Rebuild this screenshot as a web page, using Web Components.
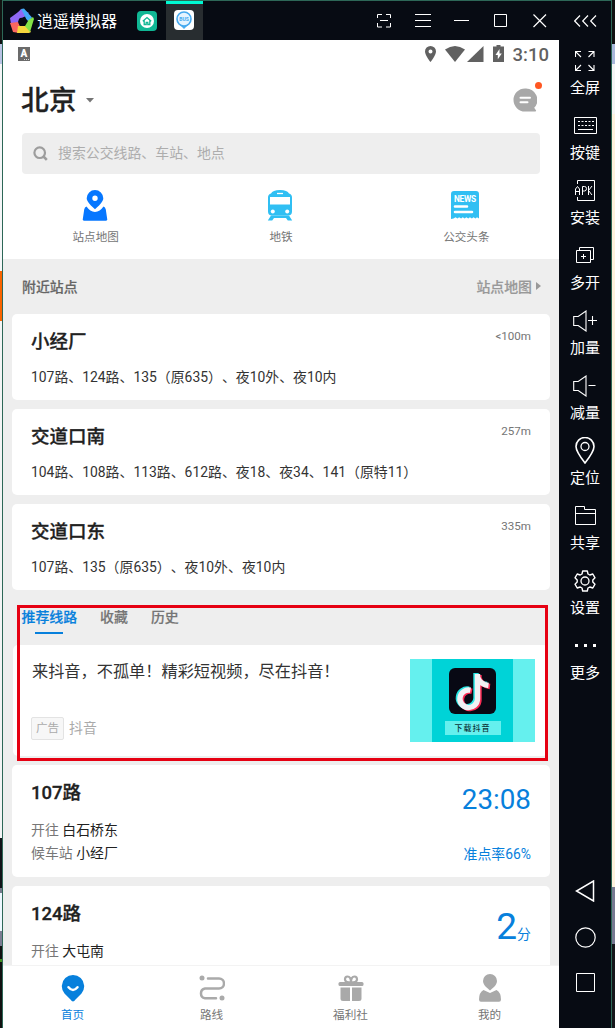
<!DOCTYPE html>
<html lang="zh-CN">
<head>
<meta charset="utf-8">
<title>逍遥模拟器</title>
<style>
html,body{margin:0;padding:0;height:100%;overflow:hidden}
body{font-family:Roboto,"Noto Sans CJK SC",sans-serif;text-spacing-trim:space-all}
</style>
</head>
<body>
<emulator-page></emulator-page>
<script>
const ICONS={
logo:[26,26,'<path d="M5 9L12 1l8 4-6 5z" fill="#8f68f5"/><path d="M12 1l3-.5 8 9-4 6-3-7z" fill="#43a8f5"/><path d="M1 10l11-8 3 5-5 4 1 4-9 1z" fill="#8f68f5"/><path d="M1 15l8-1 2 4-1 7-6-1z" fill="#fb665f"/><path d="M9 18h9l4 6-2 1H8z" fill="#f5d63e"/><path d="M24 9l1 2-4 13-6-7 2-3z" fill="#83e447"/><path d="M10 11l5-2 4 4-3 5h-5l-2-4z" fill="#070b13"/>'],
home:[20,20,'<rect width="20" height="20" rx="4" fill="#10b794"/><circle cx="10" cy="10" r="7" fill="#fff"/><path d="M5.800 10.200L10 6.500l4.200 3.700M7.200 9.300v4.200h2v-2.200h1.600v2.200h2V9.300" fill="none" stroke="#10b794" stroke-width="1.300"/>'],
bus:[20,20,'<rect width="20" height="20" rx="4" fill="#fff"/><path d="M10 19l-4-4h8z" fill="#4aaef0"/><circle cx="10" cy="9" r="7" fill="#e4f4ff" stroke="#45a9ef" stroke-width="1.600"/><text x="10" y="11" text-anchor="middle" font-family="Roboto" font-size="5" font-weight="700" fill="#45a9ef">BUS</text>'],
scan:[14,14,'<path d="M.5 4V.5H5M9 .5h4.500V4M13.500 9v4H9M5 13H.5V9M3 6.500h8" fill="none" stroke="#fff"/>'],
menu:[16,14,'<path d="M0 .5h16M0 6.500h16M0 12.500h16" stroke="#fff"/>'],
min:[15,14,'<path d="M0 6.500h15" stroke="#fff"/>'],
max:[13,13,'<path d="M.5.5h12v12H.5z" fill="none" stroke="#fff"/>'],
close:[14,14,'<path d="M.5.5l12.500 12.500M13 .5L.5 13" stroke="#fff" stroke-width="1.200"/>'],
collapse:[23,12,'<path d="M6 .5L.7 6 6 11.500M14 .5L8.700 6l5.300 5.500M22 .5L16.700 6l5.300 5.500" fill="none" stroke="#fff" stroke-width="1.200"/>'],
abox:[12,14,'<rect width="12" height="14" fill="#6b6b6b"/><text x="6" y="10" text-anchor="middle" font-family="Roboto" font-size="10" font-weight="900" fill="#fff">A</text><path d="M6 12.500h5" stroke="#ddd" stroke-dasharray="1 1"/>'],
loc:[11,16,'<path fill-rule="evenodd" d="M5.500 0A5.500 5.500 0 0 0 0 5.500C0 9.500 5.500 16 5.500 16S11 9.500 11 5.500A5.500 5.500 0 0 0 5.500 0zm0 7.500a2 2 0 1 1 0-4 2 2 0 0 1 0 4z" fill="#616161"/>'],
wifi:[20,16,'<path d="M0 3.500Q10-3.500 20 3.500L10 16z" fill="#616161"/>'],
signal:[17,16,'<path d="M16.500 0v16H0z" fill="#616161"/>'],
battery:[11,17,'<path fill-rule="evenodd" d="M3.500 0h4v1.500H11V17H0V1.500h3.500zM6.500 4L2.500 10h2.300v4.300L8.800 8.500H6.500z" fill="#616161"/>'],
chat:[24,24,'<path d="M12 .5a11.500 11.500 0 1 0 0 23h10.500q1-.4.400-1.200l-1.700-2.500A11.500 11.500 0 0 0 12 .5z" fill="#a8a8a8"/><path d="M7.500 9.800h9.500M7.500 14.300h7" stroke="#fff" stroke-width="2" stroke-linecap="round"/>'],
search:[16,16,'<circle cx="6.700" cy="6.700" r="5.300" fill="none" stroke="#9d9d9d" stroke-width="2.200"/><path d="M10.500 10.500l3.300 3.300" stroke="#9d9d9d" stroke-width="2.600"/>'],
map:[26,31,'<path fill-rule="evenodd" d="M13 0a8.300 8.300 0 0 0-8.300 8.300c0 3.600 5 8 8.300 11 3.300-3 8.300-7.400 8.300-11A8.300 8.300 0 0 0 13 0zm0 11a2.700 2.700 0 1 1 0-5.400A2.700 2.700 0 0 1 13 11z" fill="#0677ff"/><path d="M4.500 16.500Q8 21.500 13 22q5-.5 8.500-5.500 1.700.5 2.300 3l1.500 10.200-1 1H1.700l-1-1L2.200 19.500q.5-2.500 2.300-3z" fill="#0677ff"/>'],
metro:[26,31,'<path d="M4 3.500Q5.500 0 13 0t9 3.500q3 .8 3 4v14q0 4-4 4H5q-4 0-4-4v-14q0-3.200 3-4z" fill="#30bff3"/><path d="M4 25.500l-3.200 5h4.400L7 28h12l1.800 2.500h4.400l-3.200-5z" fill="#30bff3"/><path d="M3 7h20v7.500H3z" fill="#fff"/><path d="M10 3.500h6" stroke="#fff" stroke-width="1.300"/><circle cx="5.800" cy="21.500" r="2" fill="#fff"/><circle cx="20.200" cy="21.500" r="2" fill="#fff"/>'],
news:[28,28,'<path d="M0 3q0-3 3-3h22q3 0 3 3v24.500l-2-1.300-1.500 1.300-2-1.300-1.600 1.300-2-1.300-1.600 1.300-2-1.300-1.600 1.300-2-1.300-1.600 1.300-2-1.300-1.600 1.300-2-1.300L2.500 27.500 0 28z" fill="#30bff3"/><text x="3" y="11" textLength="22" font-family="Roboto" font-size="8.300" font-weight="700" fill="#fff">NEWS</text><path d="M4 15.500h12M4 21h17" stroke="#fff" stroke-width="2.600" stroke-linecap="round"/>'],
caret:[8,5,'<path d="M0 0h8L4 4.500z" fill="#757575"/>'],
right:[5,8,'<path d="M0 0v8l5-4z" fill="#999"/>'],
navhome:[24,28,'<path d="M12 27.500q-1.200 0-2.500-2L3.500 19.500A11.200 11.200 0 1 1 20.500 19.500L14.500 25.500q-1.300 2-2.500 2z" fill="#0780dc"/><path d="M7.500 13.300q4.500 5.400 9 0" fill="none" stroke="#fff" stroke-width="2.500" stroke-linecap="round"/>'],
route:[26,26,'<path d="M9 3.500h11a5 5 0 0 1 0 10H6a5 5 0 0 0 0 9.800h11" fill="none" stroke="#aaa" stroke-width="2.500" stroke-linecap="round"/><circle cx="3" cy="3" r="2.500" fill="#aaa"/><circle cx="23" cy="23" r="2.500" fill="#aaa"/>'],
gift:[26,26,'<path d="M13 7.500q-6 0-6-3Q7 1.500 9.500 1.500 13 1.500 13 7.500 13 1.500 16.500 1.500 19 1.500 19 4.500q0 3-6 3" fill="none" stroke="#a9a9a9" stroke-width="2.200"/><rect x=".5" y="7" width="25" height="4" rx="1.500" fill="#a9a9a9"/><path d="M2.500 12.500H12V26H5q-2.500 0-2.500-2.500zM14 12.500h9.500v11Q23.500 26 21 26h-7z" fill="#a9a9a9"/>'],
user:[24,28,'<path d="M12 0a7 7 0 0 0-7 7c0 4.500 5 7.500 7 9.500 2-2 7-5 7-9.500a7 7 0 0 0-7-7z" fill="#a9a9a9"/><path d="M5.500 16L12 19l6.500-3q4.500 2.500 4.500 9.500 0 2.300-2 2.300H3q-2 0-2-2.300 0-7 4.500-9.500z" fill="#a9a9a9"/>'],
full:[20,20,'<path d="M.5 6V.5H6M1 1l5 5M13.500.5h5.500V6M18.500 1l-5 5M.5 14v5.500H6M1 19l5-5M19 14v5.500h-5.500M18.500 19l-5-5" fill="none" stroke="#fff" stroke-width="1.100"/>'],
keys:[23,17,'<path d="M.5.500h22v16H.5z" fill="none" stroke="#fff"/><path d="M4 4.500h16M4 8.500h16" stroke="#fff" stroke-dasharray="2 1.500"/><path d="M4 12.500h15" stroke="#fff"/>'],
apk:[23,21,'<path d="M3.500 4V.5h17v20h-17V17" fill="none" stroke="#fff"/><path d="M1.500 15V9L3.500 6.500 5.500 9v6M1.500 11.500h4M8.500 15V6.500h2q2 0 2 2.200t-2 2.300h-2M14.500 6v9M18 6l-3.500 4.500L18 15" fill="none" stroke="#fff"/>'],
multi:[19,17,'<path d="M3.500 3V.5h14v12H15M.5 3.500h14v12H.5zM5 9.500h5M7.500 7v5" fill="none" stroke="#fff"/>'],
volup:[24,22,'<path d="M.7 6.500h4.500L13 1v20l-7.800-5.500H.7zM15 10.500h9M19.500 6v9" fill="none" stroke="#fff" stroke-width="1.100"/>'],
voldown:[24,22,'<path d="M.7 6.500h4.500L13 1v20l-7.800-5.500H.7zM15.500 10.500h7" fill="none" stroke="#fff" stroke-width="1.100"/>'],
pin:[20,27,'<path d="M10 26Q1 14.500 1 9.500a9 9 0 0 1 18 0Q19 14.500 10 26z" fill="none" stroke="#fff" stroke-width="1.600"/><circle cx="10" cy="9.500" r="4" fill="none" stroke="#fff" stroke-width="1.300"/>'],
folder:[21,19,'<path d="M.5 18.500V.5h9v3h11v15zM.5 7.500h20" fill="none" stroke="#fff"/>'],
gear:[22,22,'<path d="M8.700 1h4.600l.7 3 1.800 1 3-1 2.200 3.800-2.200 2.100v2.200l2.200 2.100-2.200 3.800-3-1-1.800 1-.7 3H8.700L8 18l-1.800-1-3 1L1 14.200l2.200-2.100V9.900L1 7.800 3.200 4l3 1L8 4z" fill="none" stroke="#fff" stroke-width="1.400" stroke-linejoin="round"/><circle cx="11" cy="11" r="4" fill="none" stroke="#fff" stroke-width="1.300"/>'],
more:[21,3,'<path d="M0 0h3v3H0zM9 0h3v3H9zM18 0h3v3h-3z" fill="#fff"/>'],
back:[20,22,'<path d="M18.500 1v20L1.500 11z" fill="none" stroke="#fff" stroke-width="1.500"/>'],
circle:[21,21,'<circle cx="10.500" cy="10.500" r="9.700" fill="none" stroke="#fff" stroke-width="1.200"/>'],
square:[19,19,'<path d="M.5.5h18v18H.5z" fill="none" stroke="#fff"/>'],
tiktok:[47,46,'<rect width="47" height="46" rx="6" fill="#080914"/><g fill="none" stroke-width="5.400"><path d="M27 5V30a8.800 8.800 0 1 1-7-8.800M27 8q2.500 7.500 11 8.500" stroke="#25e5e2"/><path d="M30 7V32a8.800 8.800 0 1 1-7-8.800M30 10q2.500 7.500 11 8.500" stroke="#fb2c55"/><path d="M28.500 6V31a8.800 8.800 0 1 1-7-8.800M28.500 9q2.500 7.500 11 8.500" stroke="#f1f1f3"/></g>']
};
function define(name,html){
  const t=document.createElement('template');t.innerHTML=html;
  customElements.define(name,class extends HTMLElement{
    constructor(){super();this.attachShadow({mode:'open'}).append(t.content.cloneNode(true))}
  });
}
customElements.define('ui-icon',class extends HTMLElement{
  connectedCallback(){
    const [w,h,body]=ICONS[this.getAttribute('name')];
    if(!this.shadowRoot)this.attachShadow({mode:'open'});
    this.shadowRoot.innerHTML=`<style>:host{display:block;flex:none;width:${w}px;height:${h}px}svg{display:block}</style><svg width="${w}" height="${h}" viewBox="0 0 ${w} ${h}">${body}</svg>`;
  }
});
define('title-bar',`<style>
:host{display:flex;height:39px;background:#070b13;color:#fff;align-items:center;font:16px/39px "Noto Sans CJK SC",sans-serif}
.name{margin-left:2px;width:80px;white-space:nowrap}.logo{margin-left:6px}
.home{margin-left:20px}.tab{margin-left:9px;width:37px;height:39px;box-sizing:border-box;border-top:3px solid #00f8d1;background:#282d30;display:flex;padding:6px 0 0 8px}
.tools{display:flex;align-items:center;margin-left:auto;padding-right:14px}
</style><ui-icon class="logo" name="logo"></ui-icon><span class="name">逍遥模拟器</span><ui-icon class="home" name="home"></ui-icon><div class="tab"><ui-icon name="bus"></ui-icon></div>
<div class="tools"><ui-icon name="scan"></ui-icon><ui-icon name="menu" style="margin-left:24px"></ui-icon><ui-icon name="min" style="margin-left:23px"></ui-icon><ui-icon name="max" style="margin-left:25px"></ui-icon><ui-icon name="close" style="margin-left:26px"></ui-icon><ui-icon name="collapse" style="margin-left:27px"></ui-icon></div>`);
define('side-item',`<style>:host{display:flex;flex-direction:column;align-items:center;height:65px;font:15px/20px "Noto Sans CJK SC",sans-serif}.i{height:35px;display:flex;align-items:center}.t{height:20px;margin-top:-1px}</style><div class="i"><slot name="icon"></slot></div><div class="t"><slot></slot></div>`);
define('side-bar',`<style>:host{display:flex;flex-direction:column;background:#070b13;color:#fff;width:52px;box-sizing:border-box;padding-top:3px}
.sys{margin-top:auto;display:flex;flex-direction:column;align-items:center;gap:25px;padding-bottom:36px}</style>
${[['full','全屏'],['keys','按键'],['apk','安装'],['multi','多开'],['volup','加量'],['voldown','减量'],['pin','定位'],['folder','共享'],['gear','设置'],['more','更多']].map(a=>`<side-item><ui-icon slot="icon" name="${a[0]}"></ui-icon>${a[1]}</side-item>`).join('')}
<div class="sys"><ui-icon name="back"></ui-icon><ui-icon name="circle"></ui-icon><ui-icon name="square"></ui-icon></div>`);
define('status-bar',`<style>:host{display:flex;height:28px;align-items:center;padding:0 10px 0 15px;color:#616161;font:500 18.500px/28px Roboto,sans-serif}.r{margin-left:auto;display:flex;align-items:center}.r span{padding-top:2px}</style>
<ui-icon name="abox"></ui-icon><div class="r"><ui-icon name="loc"></ui-icon><ui-icon name="wifi" style="margin-left:9px"></ui-icon><ui-icon name="signal" style="margin-left:2px"></ui-icon><ui-icon name="battery" style="margin:-2px 9px 0 9px"></ui-icon><span>3:10</span></div>`);
define('quick-link',`<style>:host{display:flex;flex:1;flex-direction:column;align-items:center;font-size:11.600px;line-height:16px;color:#757575}.i{height:32px;display:flex;align-items:center;margin-bottom:8px;margin-right:2px}</style><div class="i"><slot name="icon"></slot></div><div><slot></slot></div>`);
define('app-header',`<style>:host{display:block;background:#fff;height:219px}
.city{display:flex;align-items:center;height:64px;padding:0 19px;font-size:27.800px;line-height:66px;font-weight:500;color:#212121}
.city .t{height:64px;margin-left:-1px;-webkit-text-stroke:.3px #212121}
.city ui-icon.c{margin-left:9px}.chat{margin-left:auto;position:relative;margin-right:3px}.dot{position:absolute;right:-5px;top:-6px;width:7px;height:7px;border-radius:50%;background:#ff5722}
.search{margin:1px 19px 0;height:41px;border-radius:4px;background:#eee;display:flex;align-items:center;font-size:13.900px;line-height:41px;color:#adadad;padding-left:11px;gap:9px}
.links{display:flex;padding-top:15px}</style>
<status-bar></status-bar><div class="city"><span class="t">北京</span><ui-icon class="c" name="caret"></ui-icon><div class="chat"><ui-icon name="chat"></ui-icon><i class="dot"></i></div></div>
<div class="search"><ui-icon name="search"></ui-icon><span>搜索公交线路、车站、地点</span></div>
<div class="links"><quick-link><ui-icon slot="icon" name="map"></ui-icon>站点地图</quick-link><quick-link><ui-icon slot="icon" name="metro"></ui-icon>地铁</quick-link><quick-link><ui-icon slot="icon" name="news"></ui-icon>公交头条</quick-link></div>`);
define('station-card',`<style>:host{display:block;box-sizing:border-box;height:86px;margin:0 9px 9px;background:#fff;border-radius:5px;padding:15px 19px 0;color:#212121}
.h{display:flex;justify-content:space-between;font-size:18.500px;font-weight:500;line-height:26px;height:26px}.h>slot{-webkit-text-stroke:.3px #212121}.d{font-size:11.600px;font-weight:400;line-height:15px;color:#757575;-webkit-text-stroke:0}.l{font-size:13.900px;line-height:20px;margin-top:12px;white-space:nowrap;color:#333}</style>
<div class="h"><slot name="name"></slot><span class="d"><slot name="dist"></slot></span></div><div class="l"><slot></slot></div>`);
define('ad-card',`<style>:host{display:flex;justify-content:space-between;box-sizing:border-box;height:111px;margin:0 11px 0 10px;background:#fff;border-radius:5px;padding:14px 13px 0 18px}
.t{font-size:16.200px;line-height:26px;color:#333;white-space:nowrap;height:24px;margin-left:1px}.s{display:flex;align-items:center;gap:5px;margin-top:33px;font-size:13.900px;line-height:24px;color:#aaa}.b{box-sizing:border-box;font-size:11.600px;line-height:21px;border:1px solid #e3e3e3;background:#f7f7f7;border-radius:2px;width:33px;text-align:center;height:23px;white-space:nowrap}
.pic{width:125px;height:83px;background:#65f0ee;display:flex;padding-left:22px;box-sizing:border-box}.m{width:81px;background:#00d3d7;display:flex;flex-direction:column;align-items:center;padding-top:9px;box-sizing:border-box}.dl{background:#65f0ee;margin-top:7px;width:56px;height:14px;text-align:center;font-size:8px;line-height:15px;letter-spacing:1px;font-weight:500;color:#0c3438}</style>
<div><div class="t">来抖音，不孤单！精彩短视频，尽在抖音！</div><div class="s"><span class="b">广告</span><span>抖音</span></div></div>
<div class="pic"><div class="m"><ui-icon name="tiktok"></ui-icon><div class="dl">下载抖音</div></div></div>`);
define('route-card',`<style>:host{display:flex;justify-content:space-between;box-sizing:border-box;height:112px;margin:9px 9px 0;background:#fff;border-radius:5px;padding:15px 19px 0;color:#212121;font-size:13.900px;line-height:23px}
.n{font-size:18.500px;font-weight:500;line-height:26px;margin-bottom:13px;-webkit-text-stroke:.3px #212121}.r{color:#0780dc;text-align:right;display:flex;flex-direction:column;align-items:flex-end}::slotted(b){font-weight:400;color:#777}</style>
<div><div class="n"><slot name="name"></slot></div><slot></slot></div><div class="r"><slot name="time"></slot></div>`);
define('nav-item',`<style>:host{flex:1;display:flex;flex-direction:column;align-items:center;font-size:11.600px;line-height:16px;color:#757575}:host([active]){color:#0780dc}.i{height:28px;display:flex;align-items:center;margin-bottom:5px}</style><div class="i"><slot name="icon"></slot></div><div><slot></slot></div>`);
define('bottom-nav',`<style>:host{display:flex;box-sizing:border-box;height:63px;border-top:1px solid #f3f3f3;background:#fff;padding-top:8px;flex:none}</style>
<nav-item active><ui-icon slot="icon" name="navhome"></ui-icon>首页</nav-item><nav-item><ui-icon slot="icon" name="route"></ui-icon>路线</nav-item><nav-item><ui-icon slot="icon" name="gift"></ui-icon>福利社</nav-item><nav-item><ui-icon slot="icon" name="user"></ui-icon>我的</nav-item>`);
define('bus-app',`<style>:host{display:flex;flex-direction:column;width:556px;height:988px;background:#eee;overflow:hidden;font-family:Roboto,"Noto Sans CJK SC",sans-serif}
.body{flex:1;overflow:hidden}.sec{height:55px;box-sizing:border-box;display:flex;align-items:center;justify-content:space-between;padding:0 18px 2px 19px;font-size:13.900px;font-weight:500;color:#666;-webkit-text-stroke:.2px}.sec span{display:flex;align-items:center;gap:4px;color:#999}
.tabs{display:flex;gap:23px;padding:8px 19px 0;height:46px;box-sizing:border-box;font-size:13.900px;line-height:20px;font-weight:500;color:#757575;-webkit-text-stroke:.2px}.on{color:#0780dc;display:flex;flex-direction:column;align-items:center;margin-left:-.5px}.on i{width:28px;height:2px;margin-top:5px;background:#0780dc}
.time{font-size:27.800px;line-height:40px;margin-bottom:23px}.two{font-size:37px;line-height:52px}.two small{font-size:13.900px}</style>
<app-header></app-header><div class="body"><div class="sec">附近站点<span>站点地图<ui-icon name="right"></ui-icon></span></div>
<station-card><span slot="name">小经厂</span><span slot="dist">&lt;100m</span>107路、124路、135（原635）、夜10外、夜10内</station-card>
<station-card><span slot="name">交道口南</span><span slot="dist">257m</span>104路、108路、113路、612路、夜18、夜34、141（原特11）</station-card>
<station-card><span slot="name">交道口东</span><span slot="dist">335m</span>107路、135（原635）、夜10外、夜10内</station-card>
<div class="tabs"><span class="on">推荐线路<i></i></span><span>收藏</span><span>历史</span></div>
<ad-card></ad-card>
<route-card><span slot="name">107路</span><b>开往</b> 白石桥东<br><b>候车站</b> 小经厂<span slot="time" class="time">23:08</span><span slot="time">准点率66%</span></route-card>
<route-card><span slot="name">124路</span><b>开往</b> 大屯南<span slot="time" class="two">2<small>分</small></span></route-card>
</div><bottom-nav></bottom-nav>`);
define('emulator-page',`<style>:host{display:grid;grid-template-columns:2px 610px 3px;width:615px;height:1028px;position:relative}
.l{background:linear-gradient(#111 0 44px,#b9c3e4 44px 64px,#f5f6f8 64px 271px,#fa6400 271px 321px,#f3f4f5 321px 838px,#111318 838px 888px,#777a8c 888px 893px,#eef7ff 893px 931px,#7b7c92 931px 946px,#111 946px 959px,#429020 959px 962px,#111 962px)}
.r{background:linear-gradient(#111 0 44px,#a9b7da 44px 64px,#f4f4f4 64px 114px,#fdf1dd 114px 887px,#777991 887px 944px,#15161a 944px)}
.win{box-sizing:border-box;border:1px solid #2d6757;border-bottom:0;height:1028px;overflow:hidden}.main{display:flex;height:988px}side-bar{width:52px}
.mark{position:absolute;left:17px;top:605px;width:531px;height:156px;box-sizing:border-box;border:3px solid #e60012}</style>
<div class="l"></div><div class="win"><title-bar></title-bar><div class="main"><bus-app></bus-app><side-bar></side-bar></div></div><div class="r"></div><div class="mark"></div>`);
</script>
</body>
</html>
